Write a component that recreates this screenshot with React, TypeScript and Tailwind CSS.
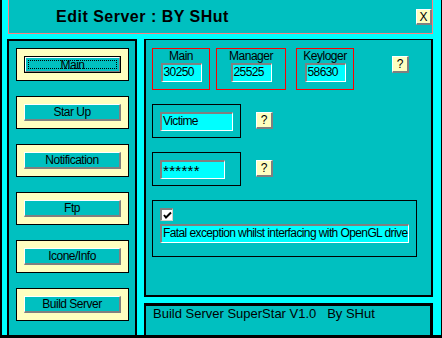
import React from 'react';

const font = { fontFamily: '"Liberation Sans", Arial, sans-serif' };

const menuItems = ['Main', 'Star Up', 'Notification', 'Ftp', 'Icone/Info', 'Build Server'];

const HelpButton: React.FC = () => (
  <button className="w-[17px] h-[17px] bg-[#ffffc0] border-t border-l border-b-2 border-r-2 border-t-white border-l-white border-b-[#808080] border-r-[#808080] text-[12px] leading-none text-black flex items-center justify-center">
    ?
  </button>
);

const Field: React.FC<{ value: string; width: string; spaced?: boolean }> = ({ value, width, spaced }) => (
  <div
    className={`${width} h-[19px] bg-[#00ffff] border-t-2 border-l-2 border-b border-r border-t-[#808080] border-l-[#808080] border-b-white border-r-white overflow-hidden whitespace-nowrap pl-[1px] text-black ${spaced ? 'text-[15px] leading-[17px] tracking-[0.3px]' : 'text-[12px] leading-[15px] tracking-[-0.6px]'}`}
  >
    {value}
  </div>
);

const PortBox: React.FC<{ label: string; value: string; width: string; className?: string }> = ({ label, value, width, className }) => (
  <div className={`${width} h-[42px] border border-[#ff0000] flex flex-col items-center ${className ?? ''}`}>
    <div className="h-[14px] text-[12px] leading-[14px] tracking-[-0.5px] text-black">{label}</div>
    <Field value={value} width="w-[41px]" />
  </div>
);

const App: React.FC = () => {
  return (
    <div className="w-[442px] h-[338px] bg-black pl-[2px] pr-px pb-[3px]" style={font}>
      <div className="h-full bg-[#00ffff] flex flex-col">
        {/* title bar */}
        <div className="ml-[6px] w-[425px] h-[34px] shrink-0 bg-[#00c0c0] border-x border-b border-[#ff8080] flex items-start justify-between">
          <div className="pl-[47px] pt-[8px] text-[16px] leading-[18px] font-bold tracking-[0.5px] text-black">
            Edit Server : BY SHut
          </div>
          <button className="mt-[9px] w-[16px] h-[16px] bg-[#ffffc0] border-t border-l border-b-2 border-r-2 border-t-white border-l-white border-b-[#808080] border-r-[#808080] text-[12px] leading-none text-black flex items-center justify-center">
            X
          </button>
        </div>

        <div className="flex flex-1 mt-[5px]">
          {/* left menu */}
          <div className="ml-[5px] w-[130px] bg-[#00c0c0] border-2 border-b-0 border-black pl-[7px] pt-[7px] flex flex-col gap-[15px]">
            {menuItems.map((item, i) => (
              <div key={item} className="w-[113px] h-[33px] bg-[#ffffc0] border border-black pl-[7px] pt-[7px]">
                {i === 0 ? (
                  <button className="w-[97px] h-[17px] border border-black bg-[#00c0c0] flex">
                    <span className="flex-1 flex border-t border-l border-b border-r border-t-white border-l-white border-b-[#808080] border-r-[#808080]">
                      <span className="flex-1 m-[2px] border border-dotted border-black flex items-center justify-center text-[12px] leading-none tracking-[-0.5px] text-black">
                        {item}
                      </span>
                    </span>
                  </button>
                ) : (
                  <button className="w-[97px] h-[17px] bg-[#00c0c0] border-t border-l border-b-2 border-r-2 border-t-white border-l-white border-b-[#808080] border-r-[#808080] flex items-center justify-center text-[12px] leading-none tracking-[-0.5px] text-black">
                    {item}
                  </button>
                )}
              </div>
            ))}
          </div>

          {/* right side */}
          <div className="ml-[7px] w-[289px] flex flex-col">
            <div className="h-[258px] bg-[#00c0c0] border-2 border-t border-black pl-[6px] pt-[8px]">
              <div className="flex items-start">
                <PortBox label="Main" value="30250" width="w-[58px]" />
                <PortBox label="Manager" value="25525" width="w-[70px]" className="ml-[6px]" />
                <PortBox label="Keyloger" value="58630" width="w-[58px]" className="ml-[10px]" />
                <div className="ml-[38px] mt-[8px]">
                  <HelpButton />
                </div>
              </div>

              <div className="flex items-start mt-[14px]">
                <div className="w-[89px] h-[34px] border border-black pl-[7px] pt-[7px]">
                  <Field value="Victime" width="w-[73px]" />
                </div>
                <div className="ml-[15px] mt-[8px]">
                  <HelpButton />
                </div>
              </div>

              <div className="flex items-start mt-[14px]">
                <div className="w-[89px] h-[34px] border border-black pl-[7px] pt-[7px]">
                  <Field value="******" width="w-[65px]" spaced />
                </div>
                <div className="ml-[15px] mt-[8px]">
                  <HelpButton />
                </div>
              </div>

              <div className="mt-[14px] w-[265px] h-[57px] border border-black pl-[7px] pt-[7px]">
                <div className="w-[13px] h-[13px] bg-white border-t-2 border-l-2 border-b border-r border-t-[#808080] border-l-[#808080] border-b-[#d4d0c8] border-r-[#d4d0c8] flex items-center justify-center">
                  <svg width="9" height="9" viewBox="0 0 9 9">
                    <path d="M1 4 L3 6.5 L8 1.5" stroke="black" strokeWidth="2" fill="none" />
                  </svg>
                </div>
                <div className="mt-[3px]">
                  <Field value="Fatal exception whilst interfacing with OpenGL drive" width="w-[249px]" />
                </div>
              </div>
            </div>

            <div className="mt-[6px] flex-1 bg-[#00c0c0] border-t-[3px] border-l-2 border-r-[3px] border-black pl-[7px] pt-[1px]">
              <div className="text-[13px] leading-[14px] text-black whitespace-pre">
                Build Server SuperStar V1.0   By SHut
              </div>
            </div>
          </div>
        </div>
      </div>
    </div>
  );
};

export default App;
